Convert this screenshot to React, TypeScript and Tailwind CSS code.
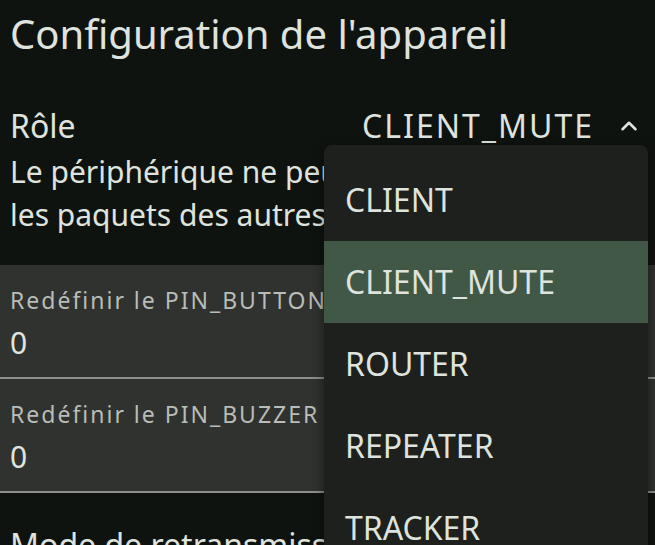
import { ChevronUp } from "lucide-react";

const roles = ["CLIENT", "CLIENT_MUTE", "ROUTER", "REPEATER", "TRACKER"];

function PinField({ label, value }: { label: string; value: string }) {
  return (
    <div className="bg-[#2f322e] border-b-2 border-[#8c908b] pl-[10px] pt-[21px] h-[114px] flex flex-col">
      <span className="text-[23px] leading-[28px] tracking-[2px] text-[#b9bcb7] whitespace-nowrap">{label}</span>
      <span className="text-[30px] leading-[36px] text-[#e0e4de] mt-[11px]">{value}</span>
    </div>
  );
}

export default function App() {
  return (
    <div
      className="relative w-[655px] h-[545px] overflow-hidden bg-[#0f130f] text-[#dfe3dd]"
      style={{ fontFamily: '"Noto Sans", "Open Sans", sans-serif' }}
    >
      <h1 className="text-[40px] leading-[48px] pl-[10px] pt-[10px] whitespace-nowrap">Configuration de l'appareil</h1>

      <div className="flex items-center justify-between pl-[10px] pr-[13px] mt-[48px] h-[40px]">
        <span className="text-[32px] leading-[40px]">Rôle</span>
        <div className="flex items-center gap-[22px]">
          <span className="text-[32px] leading-[40px] tracking-[2px]">CLIENT_MUTE</span>
          <ChevronUp className="w-[26px] h-[26px]" strokeWidth={2.3} />
        </div>
      </div>

      <p className="text-[30px] leading-[43px] pl-[10px] mt-[4px] whitespace-nowrap">
        Le périphérique ne peut pas transmettre
        <br />
        les paquets des autres appareils
      </p>

      <div className="mt-[29px] flex flex-col">
        <PinField label="Redéfinir le PIN_BUTTON" value="0" />
        <PinField label="Redéfinir le PIN_BUZZER" value="0" />
      </div>

      <p className="text-[32px] leading-[40px] pl-[10px] mt-[32px] whitespace-nowrap">Mode de retransmission</p>

      {/* dropdown menu */}
      <div className="absolute left-[324px] top-[145px] w-[324px] bg-[#1d201c] rounded-[8px] pt-[14px] shadow-[0_4px_12px_rgba(0,0,0,0.5)]">
        {roles.map((r) => (
          <div
            key={r}
            className={
              r === "CLIENT_MUTE"
                ? "h-[82px] flex items-center pl-[21px] text-[32px] bg-[#425846]"
                : "h-[82px] flex items-center pl-[21px] text-[32px]"
            }
          >
            {r}
          </div>
        ))}
      </div>
    </div>
  );
}
